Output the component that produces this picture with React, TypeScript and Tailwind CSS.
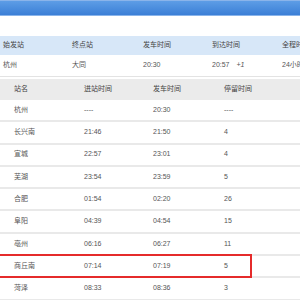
const FONT = "font-['Liberation_Sans','Noto_Sans_CJK_SC',sans-serif]";

const STOPS = [
  { name: '杭州', arrive: '----', depart: '20:30', stay: '----' },
  { name: '长兴南', arrive: '21:46', depart: '21:50', stay: '4' },
  { name: '宣城', arrive: '22:57', depart: '23:01', stay: '4' },
  { name: '芜湖', arrive: '23:54', depart: '23:59', stay: '5' },
  { name: '合肥', arrive: '01:54', depart: '02:20', stay: '26' },
  { name: '阜阳', arrive: '04:39', depart: '04:54', stay: '15' },
  { name: '亳州', arrive: '06:16', depart: '06:27', stay: '11' },
  { name: '商丘南', arrive: '07:14', depart: '07:19', stay: '5', mark: true },
  { name: '菏泽', arrive: '08:33', depart: '08:36', stay: '3' },
];

export default function App() {
  return (
    <div className={`w-[300px] h-[300px] overflow-hidden bg-white text-[7px] text-[#555] ${FONT}`}>
      {/* 顶部蓝色标题栏 */}
      <div className="h-[16px] border-t border-[#8ab4ea] bg-gradient-to-b from-[#5d9de6] to-[#3b7fd6] border-b border-[#6fa3e4]" />
      <div className="h-[20px]" />

      {/* 车次概要 */}
      <div className="flex h-[19px] items-center bg-[#d7e7f8] text-[#444] whitespace-nowrap">
        <span className="w-[72px] shrink-0 pl-[3px]">始发站</span>
        <span className="w-[71px] shrink-0">终点站</span>
        <span className="w-[69px] shrink-0">发车时间</span>
        <span className="w-[70px] shrink-0">到达时间</span>
        <span className="shrink-0">全程时间</span>
      </div>
      <div className="flex h-[22px] items-center whitespace-nowrap border-b border-[#e3e3e3]">
        <span className="w-[72px] shrink-0 pl-[3px]">杭州</span>
        <span className="w-[71px] shrink-0">大同</span>
        <span className="w-[69px] shrink-0">20:30</span>
        <span className="w-[70px] shrink-0">
          20:57<i className="ml-[7px]">+1</i>
        </span>
        <span className="shrink-0">24小时</span>
      </div>
      <div className="h-[2px]" />

      {/* 经停站列表 */}
      <div className="flex h-[21px] items-center bg-[#ebebeb] text-[#444]">
        <span className="w-[84px] shrink-0 pl-[14px]">站名</span>
        <span className="w-[69px] shrink-0">进站时间</span>
        <span className="w-[71px] shrink-0">发车时间</span>
        <span>停留时间</span>
      </div>
      {STOPS.map((s) => (
        <div
          key={s.name}
          className="relative flex h-[22.3px] items-center border-b-2 border-[#e9e9e9]"
        >
          <span className="w-[84px] shrink-0 pl-[14px]">{s.name}</span>
          <span className="w-[69px] shrink-0">{s.arrive}</span>
          <span className="w-[71px] shrink-0">{s.depart}</span>
          <span>{s.stay}</span>
          {s.mark && (
            <div className="absolute left-[-3px] top-[-2px] w-[255px] h-[24px] border-2 border-[#e52b2b]" />
          )}
        </div>
      ))}
    </div>
  );
}
